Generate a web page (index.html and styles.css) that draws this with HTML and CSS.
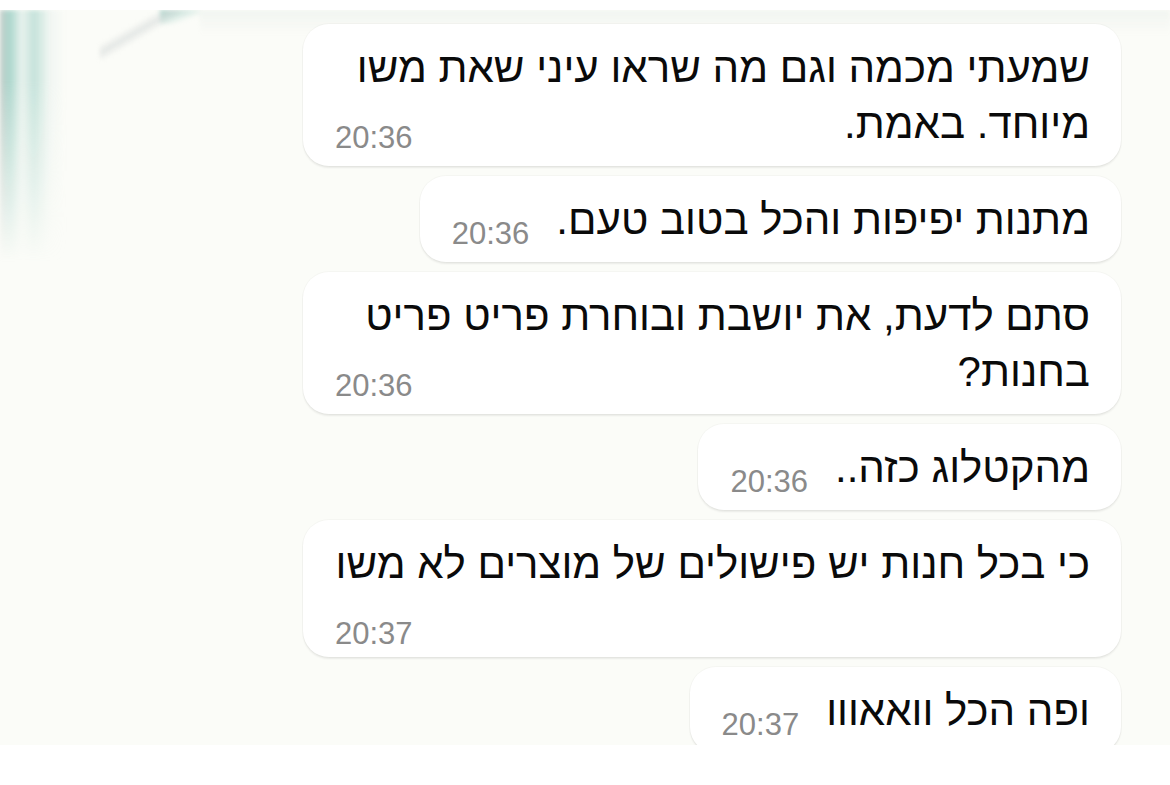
FILE: index.html
```html
<!DOCTYPE html>
<html lang="he">
<head>
    <meta charset="utf-8">
    <meta name="viewport" content="width=device-width, initial-scale=1.0">
    <title>צ'אט</title>
    <link rel="stylesheet" href="styles.css">
</head>
<body>
    <div class="chat">
        <div class="wallpaper"></div>
        <div class="messages">
            <div class="bubble">
                שמעתי מכמה וגם מה שראו עיני שאת משו מיוחד. באמת.
                <span class="time">20:36</span>
            </div>
            <div class="bubble">
                מתנות יפיפות והכל בטוב טעם.
                <span class="time">20:36</span>
            </div>
            <div class="bubble">
                סתם לדעת, את יושבת ובוחרת פריט פריט בחנות?
                <span class="time">20:36</span>
            </div>
            <div class="bubble">
                מהקטלוג כזה..
                <span class="time">20:36</span>
            </div>
            <div class="bubble">
                כי בכל חנות יש פישולים של מוצרים לא משו
                <span class="time">20:37</span>
            </div>
            <div class="bubble">
                ופה הכל וואאווו
                <span class="time">20:37</span>
            </div>
        </div>
    </div>
</body>
</html>
```
FILE: styles.css
```css
body {
    margin: 0;
    background: #fff;
    font-family: "Liberation Sans", Arial, sans-serif;
    color: #0a0a0a;
}

.chat {
    position: relative;
    margin-top: 10px;
    height: 735px;
    overflow: hidden;
    background: #fbfcf8;
}

/* blurred wallpaper strokes in the corner */
.wallpaper {
    position: absolute;
    left: 0;
    top: 0;
    width: 100%;
    height: 280px;
    background:
        linear-gradient(90deg, rgba(160, 175, 172, .6) 0, rgba(120, 190, 176, .6) 10px, rgba(200, 225, 220, .35) 22px, rgba(130, 195, 182, .45) 34px, rgba(215, 232, 228, .25) 50px, rgba(251, 252, 248, 0) 66px),
        linear-gradient(150deg, rgba(251, 252, 248, 0) 30%, rgba(205, 210, 210, .5) 38%, rgba(251, 252, 248, 0) 46%) 100px 0 / 110px 50px no-repeat,
        linear-gradient(160deg, rgba(110, 185, 170, .6) 0, rgba(251, 252, 248, 0) 70%) 160px 0 / 40px 14px no-repeat,
        linear-gradient(180deg, rgba(232, 238, 234, .5) 0, rgba(251, 252, 248, 0) 24px) 200px 0 / 970px 30px no-repeat;
    filter: blur(2px);
    -webkit-mask-image: linear-gradient(180deg, #000 0, #000 25%, transparent 90%);
    mask-image: linear-gradient(180deg, #000 0, #000 25%, transparent 90%);
}

.messages {
    position: relative;
    direction: rtl;
    display: flex;
    flex-direction: column;
    align-items: flex-start;
    gap: 10px;
    padding: 14px 49px 0 0;
}

.bubble {
    box-sizing: border-box;
    max-width: 818px;
    padding: 16px 31px 14px 32px;
    background: #fff;
    border-radius: 26px;
    box-shadow: 0 2px 2px rgba(0, 0, 0, .07), 0 0 0 1px rgba(0, 0, 0, .025);
    font-size: 42px;
    line-height: 56px;
}

/* time sits at the end of the last line, or drops below when the line is full */
.time {
    float: left;
    position: relative;
    top: 16px;
    margin-right: 27px;
    font-size: 31px;
    line-height: 51px;
    color: #8a8a8a;
    direction: ltr;
}
```
